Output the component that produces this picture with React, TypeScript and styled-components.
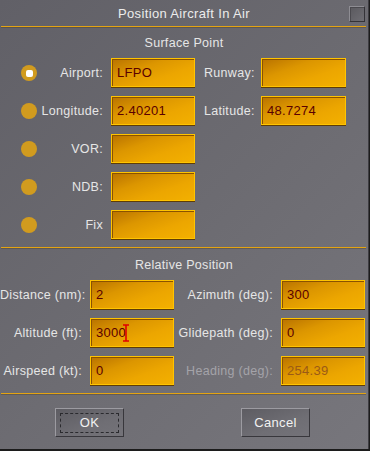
import React from 'react'
import styled, { createGlobalStyle } from 'styled-components'

const GlobalStyle = createGlobalStyle`
	html, body {
		margin: 0;
		padding: 0;
		background: #1c1c1c;
	}
	body {
		font-family: 'Liberation Sans', Arial, sans-serif;
	}
`

const Dialog = styled.div`
	width: 369px;
	height: 449px;
	box-sizing: border-box;
	border-right: 1px solid #3e3d42;
	background: linear-gradient(135deg, #616067 0%, #6c6b71 50%, #77767c 100%);
	color: #e6e6e6;
	font-size: 12.5px;
	display: flex;
	flex-direction: column;
`

const TitleBar = styled.div`
	height: 26px;
	display: grid;
	grid-template-columns: 1fr auto 1fr;
	align-items: center;
	font-size: 13px;
	letter-spacing: 0.35px;
	color: #ececec;
`

const CloseBox = styled.div`
	justify-self: end;
	margin-right: 3px;
	margin-top: 1px;
	width: 16px;
	height: 16px;
	box-sizing: border-box;
	border: 1px solid #8e8d93;
	border-right-color: #343338;
	border-bottom-color: #343338;
	background: linear-gradient(135deg, #5a595e, #6f6e74);
	box-shadow: inset 1px 1px 0 #4a494e;
`

const Divider = styled.div`
	height: 1px;
	margin: 0 2px 0 1px;
	background: #e4a412;
	box-shadow: 0 1px 0 rgba(60, 40, 0, 0.25);
`

const SectionTitle = styled.div<{ $tall?: boolean }>`
	height: ${p => (p.$tall ? '32px' : '31px')};
	display: flex;
	align-items: center;
	justify-content: center;
	padding-top: 1px;
	box-sizing: border-box;
	letter-spacing: 0.3px;
`

const Rows = styled.div`
	display: flex;
	flex-direction: column;
	gap: 9px;
	padding-bottom: 8px;
`

const SurfaceRow = styled.div`
	height: 29px;
	display: grid;
	grid-template-columns: 16px 74px 84px 66px 85px;
	align-items: center;
	padding-left: 21px;
`

const Radio = styled.div<{ $on?: boolean }>`
	width: 16px;
	height: 16px;
	border-radius: 50%;
	background: #d19b1f;
	display: flex;
	align-items: center;
	justify-content: center;
	&::after {
		content: '';
		display: ${p => (p.$on ? 'block' : 'none')};
		width: 7px;
		height: 7px;
		border-radius: 2px;
		background: #ffffff;
	}
`

const Label = styled.div<{ $right?: boolean; $disabled?: boolean }>`
	text-align: ${p => (p.$right ? 'right' : 'left')};
	padding-right: ${p => (p.$right ? '8px' : '0')};
	padding-left: ${p => (p.$right ? '0' : '9px')};
	color: ${p => (p.$disabled ? '#a4a3a9' : '#e6e6e6')};
	white-space: nowrap;
	letter-spacing: 0.3px;
`

const Field = styled.div<{ $disabled?: boolean }>`
	height: 29px;
	box-sizing: border-box;
	border: 1px solid #ffc400;
	box-shadow: inset 1px 1px 0 #8a5200, 0 1px 0 #5e3c06;
	background: linear-gradient(160deg, #b87200 0%, #dc9600 35%, #eca600 65%, #f3b000 100%);
	display: flex;
	align-items: center;
	padding-left: 5px;
	font-size: 13px;
	letter-spacing: 0.3px;
	color: ${p => (p.$disabled ? '#9b5a16' : '#5a0000')};
	margin-bottom: 1px;
`

const Caret = styled.svg`
	margin-left: -3px;
	margin-top: 1px;
`

const RelRow = styled.div`
	height: 29px;
	display: grid;
	grid-template-columns: 90px 84px 107px 84px;
	align-items: center;
`

const Footer = styled.div`
	flex: 1;
	display: flex;
	align-items: flex-start;
	padding-top: 14px;
	padding-left: 55px;
	gap: 117px;
`

const Button = styled.div<{ $focus?: boolean }>`
	width: 69px;
	height: 29px;
	box-sizing: border-box;
	border: 1px solid #9c9ba1;
	border-right-color: #38373c;
	border-bottom-color: #38373c;
	background: linear-gradient(160deg, #5d5c62, #6f6e74 60%, #747379);
	display: flex;
	align-items: center;
	justify-content: center;
	color: #f2f2f2;
	font-size: 13px;
	letter-spacing: 0.3px;
	position: relative;
	&::before {
		content: '';
		display: ${p => (p.$focus ? 'block' : 'none')};
		position: absolute;
		inset: 4px 4px 3px 4px;
		border: 1px dashed #2a2a2e;
	}
`

const surface = [
	{ label: 'Airport:', value: 'LFPO', on: true, l2: 'Runway:', v2: '' },
	{ label: 'Longitude:', value: '2.40201', l2: 'Latitude:', v2: '48.7274' },
	{ label: 'VOR:', value: '' },
	{ label: 'NDB:', value: '' },
	{ label: 'Fix', value: '' },
]

export default function App() {
	return (
		<>
			<GlobalStyle />
			<Dialog>
				<TitleBar>
					<span />
					<span>Position Aircraft In Air</span>
					<CloseBox />
				</TitleBar>
				<Divider />
				<SectionTitle>Surface Point</SectionTitle>
				<Rows>
					{surface.map(r => (
						<SurfaceRow key={r.label}>
							<Radio $on={r.on} />
							<Label $right>{r.label}</Label>
							<Field>{r.value}</Field>
							{r.l2 && <Label>{r.l2}</Label>}
							{r.l2 && <Field>{r.v2}</Field>}
						</SurfaceRow>
					))}
				</Rows>
				<Divider />
				<SectionTitle $tall>Relative Position</SectionTitle>
				<Rows>
					<RelRow>
						<Label $right>Distance (nm):</Label>
						<Field>2</Field>
						<Label $right>Azimuth (deg):</Label>
						<Field>300</Field>
					</RelRow>
					<RelRow>
						<Label $right>Altitude (ft):</Label>
						<Field>
							3000
							<Caret width="6" height="18" viewBox="0 0 6 18">
								<path d="M0 1h6M3 1v16M0 17h6" stroke="#e00000" strokeWidth="1.6" fill="none" />
							</Caret>
						</Field>
						<Label $right>Glidepath (deg):</Label>
						<Field>0</Field>
					</RelRow>
					<RelRow>
						<Label $right>Airspeed (kt):</Label>
						<Field>0</Field>
						<Label $right $disabled>
							Heading (deg):
						</Label>
						<Field $disabled>254.39</Field>
					</RelRow>
				</Rows>
				<Divider />
				<Footer>
					<Button $focus>OK</Button>
					<Button>Cancel</Button>
				</Footer>
			</Dialog>
		</>
	)
}
